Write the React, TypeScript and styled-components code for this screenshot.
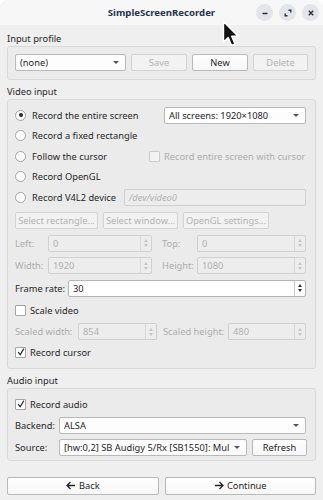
import React from 'react';
import styled, { createGlobalStyle, css } from 'styled-components';

const GlobalStyle = createGlobalStyle`
  html, body { margin: 0; padding: 0; background: #ffffff; }
  body { font-family: "Noto Sans", "DejaVu Sans", sans-serif; font-size: 9.3px; color: #262626; }
`;

const Window = styled.div`
  width: 323px;
  height: 500px;
  background: #efefef;
  border-radius: 8px 8px 0 0;
  overflow: hidden;
  position: relative;
  display: flex;
  flex-direction: column;
`;

const TitleBar = styled.div`
  height: 25px;
  background: #f7f7f8;
  display: flex;
  align-items: center;
  justify-content: center;
  position: relative;
`;

const Title = styled.div`
  font-weight: 700;
  font-size: 9.6px;
  color: #25334f;
`;

const WinButtons = styled.div`
  position: absolute;
  right: 4px;
  top: 4px;
  display: flex;
  gap: 6px;
`;

const WinButton = styled.div`
  width: 17px;
  height: 17px;
  border-radius: 50%;
  background: #e3e5e9;
  display: flex;
  align-items: center;
  justify-content: center;
`;

const Body = styled.div`
  padding: 0 7px 0 7px;
  display: flex;
  flex-direction: column;
`;

const GroupLabel = styled.div<{ $top: number }>`
  margin-top: ${(p) => p.$top}px;
  height: 14px;
  line-height: 14px;
`;

const Group = styled.div<{ $pt: number; $pb: number }>`
  border: 1px solid #d9d9d9;
  border-radius: 3px;
  background: #ebebeb;
  padding: ${(p) => p.$pt}px 9px ${(p) => p.$pb}px 7px;
  display: flex;
  flex-direction: column;
`;

const Row = styled.div<{ $h: number; $gap?: number }>`
  height: ${(p) => p.$h}px;
  display: flex;
  align-items: center;
  gap: ${(p) => p.$gap ?? 0}px;
`;

const Cell = styled.div<{ $w: number }>`
  width: ${(p) => p.$w}px;
  flex: none;
  display: flex;
  align-items: center;
`;

const Label = styled.span<{ $disabled?: boolean; $w?: number; $pl?: number }>`
  color: ${(p) => (p.$disabled ? '#adadad' : '#262626')};
  white-space: nowrap;
  box-sizing: border-box;
  padding-left: ${(p) => p.$pl ?? 0}px;
  ${(p) => p.$w !== undefined && css`width: ${p.$w}px; flex: none;`}
`;

const buttonBase = css<{ $disabled?: boolean }>`
  height: 17px;
  box-sizing: border-box;
  border-radius: 2px;
  border: 1px solid ${(p) => (p.$disabled ? '#d3d3d3' : '#b9b9b9')};
  background: ${(p) => (p.$disabled ? '#f2f2f2' : 'linear-gradient(#fefefe, #f7f7f7)')};
  color: ${(p) => (p.$disabled ? '#b3b3b3' : '#262626')};
  display: flex;
  align-items: center;
  white-space: nowrap;
  overflow: hidden;
`;

const Button = styled.div<{ $w: number; $disabled?: boolean; $ml?: number }>`
  ${buttonBase};
  width: ${(p) => p.$w}px;
  margin-left: ${(p) => p.$ml ?? 0}px;
  flex: none;
  justify-content: center;
  gap: 3px;
`;

const Combo = styled.div<{ $w?: number; $disabled?: boolean }>`
  ${buttonBase};
  ${(p) => (p.$w ? css`width: ${p.$w}px; flex: none;` : css`flex: 1;`)}
  justify-content: space-between;
  padding: 0 6px 0 4px;
  background: #fdfdfd;
`;

const ComboText = styled.span`
  overflow: hidden;
  white-space: nowrap;
`;

const Arrow = styled.span`
  width: 0;
  height: 0;
  border-left: 3px solid transparent;
  border-right: 3px solid transparent;
  border-top: 3px solid #555;
  flex: none;
  margin-left: 4px;
`;

const Field = styled.div<{ $w?: number; $disabled?: boolean }>`
  height: 17px;
  box-sizing: border-box;
  border: 1px solid ${(p) => (p.$disabled ? '#d0d0d0' : '#b5b5b5')};
  border-radius: 2px;
  background: ${(p) => (p.$disabled ? '#ededed' : '#ffffff')};
  color: ${(p) => (p.$disabled ? '#b0b0b0' : '#262626')};
  ${(p) => (p.$w ? css`width: ${p.$w}px; flex: none;` : css`flex: 1;`)}
  display: flex;
  align-items: center;
  padding-left: 4px;
`;

const FieldText = styled.span<{ $italic?: boolean }>`
  flex: 1;
  font-style: ${(p) => (p.$italic ? 'italic' : 'normal')};
`;

const SpinArrows = styled.div<{ $disabled?: boolean }>`
  width: 10px;
  height: 100%;
  border-left: 1px solid ${(p) => (p.$disabled ? '#d8d8d8' : '#c8c8c8')};
  display: flex;
  flex-direction: column;
  align-items: center;
  justify-content: center;
  gap: 2px;
`;

const Tri = styled.span<{ $up?: boolean; $disabled?: boolean }>`
  width: 0;
  height: 0;
  border-left: 2.5px solid transparent;
  border-right: 2.5px solid transparent;
  ${(p) =>
    p.$up
      ? css`border-bottom: 3px solid ${p.$disabled ? '#c4c4c4' : '#333'};`
      : css`border-top: 3px solid ${p.$disabled ? '#c4c4c4' : '#333'};`}
`;

const RadioCircle = styled.span<{ $checked?: boolean }>`
  width: 11px;
  height: 11px;
  box-sizing: border-box;
  border-radius: 50%;
  border: 1px solid #a3a3a3;
  background: #ffffff;
  display: flex;
  align-items: center;
  justify-content: center;
  margin-right: 6px;
  flex: none;
  &::after {
    content: '';
    width: 4px;
    height: 4px;
    border-radius: 50%;
    background: ${(p) => (p.$checked ? '#2a2a2a' : 'transparent')};
  }
`;

const CheckBox = styled.span<{ $disabled?: boolean }>`
  width: 11px;
  height: 11px;
  box-sizing: border-box;
  border: 1px solid ${(p) => (p.$disabled ? '#cccccc' : '#a5a5a5')};
  background: ${(p) => (p.$disabled ? '#f2f2f2' : '#ffffff')};
  border-radius: 1px;
  margin-right: 4px;
  flex: none;
  display: flex;
  align-items: center;
  justify-content: center;
`;

const Footer = styled.div`
  margin-top: 16px;
  display: flex;
  gap: 6px;
`;

const FooterButton = styled.div`
  ${buttonBase};
  flex: 1;
  height: 18px;
  justify-content: center;
  gap: 3px;
`;

const Pointer = styled.svg`
  position: absolute;
  left: 222px;
  top: 20px;
`;

const Radio = ({ checked, label }: { checked?: boolean; label: string }) => (
  <>
    <RadioCircle $checked={checked} />
    <Label>{label}</Label>
  </>
);

const Check = ({ checked, disabled, label }: { checked?: boolean; disabled?: boolean; label: string }) => (
  <>
    <CheckBox $disabled={disabled}>
      {checked && (
        <svg width="8" height="8" viewBox="0 0 8 8">
          <path d="M1.2 4.2L3.2 6.8L6.8 0.8" stroke="#1c1c1c" strokeWidth="1.2" fill="none" />
        </svg>
      )}
    </CheckBox>
    <Label $disabled={disabled}>{label}</Label>
  </>
);

const Spin = ({ value, w, disabled }: { value: string; w?: number; disabled?: boolean }) => (
  <Field $w={w} $disabled={disabled}>
    <FieldText>{value}</FieldText>
    <SpinArrows $disabled={disabled}>
      <Tri $up $disabled={disabled} />
      <Tri $disabled={disabled} />
    </SpinArrows>
  </Field>
);

const ArrowLeft = () => (
  <svg width="10" height="9" viewBox="0 0 10 9">
    <path d="M9 4.5H1.5M4.5 1L1 4.5 4.5 8" stroke="#222" strokeWidth="1.3" fill="none" />
  </svg>
);

const ArrowRight = () => (
  <svg width="10" height="9" viewBox="0 0 10 9">
    <path d="M1 4.5H8.5M5.5 1L9 4.5 5.5 8" stroke="#222" strokeWidth="1.3" fill="none" />
  </svg>
);

export default function App() {
  return (
    <>
      <GlobalStyle />
      <Window>
        <TitleBar>
          <Title>SimpleScreenRecorder</Title>
          <WinButtons>
            <WinButton>
              <svg width="8" height="8" viewBox="0 0 8 8">
                <path d="M1.5 4.5h5" stroke="#25334f" strokeWidth="1.4" />
              </svg>
            </WinButton>
            <WinButton>
              <svg width="8" height="8" viewBox="0 0 8 8">
                <path d="M4.5 1.2h2.3v2.3M3.5 6.8H1.2V4.5" stroke="#25334f" strokeWidth="1.4" fill="none" />
              </svg>
            </WinButton>
            <WinButton>
              <svg width="8" height="8" viewBox="0 0 8 8">
                <path d="M1.8 1.8l4.4 4.4M6.2 1.8L1.8 6.2" stroke="#25334f" strokeWidth="1.4" />
              </svg>
            </WinButton>
          </WinButtons>
        </TitleBar>
        <Body>
          <GroupLabel $top={7}>Input profile</GroupLabel>
          <Group $pt={7} $pb={8}>
            <Row $h={17} $gap={5}>
              <Combo $w={111}>
                <ComboText>(none)</ComboText>
                <Arrow />
              </Combo>
              <Button $w={56} $disabled>Save</Button>
              <Button $w={56}>New</Button>
              <Button $w={55} $disabled>Delete</Button>
            </Row>
          </Group>

          <GroupLabel $top={5}>Video input</GroupLabel>
          <Group $pt={5} $pb={6}>
            <Row $h={20.5}>
              <Cell $w={149}>
                <Radio checked label="Record the entire screen" />
              </Cell>
              <Combo>
                <ComboText>All screens: 1920×1080</ComboText>
                <Arrow />
              </Combo>
            </Row>
            <Row $h={20.5}>
              <Radio label="Record a fixed rectangle" />
            </Row>
            <Row $h={20.5}>
              <Cell $w={134}>
                <Radio label="Follow the cursor" />
              </Cell>
              <Check disabled label="Record entire screen with cursor" />
            </Row>
            <Row $h={20.5}>
              <Radio label="Record OpenGL" />
            </Row>
            <Row $h={21.5}>
              <Cell $w={109}>
                <Radio label="Record V4L2 device" />
              </Cell>
              <Field $disabled>
                <FieldText $italic>/dev/video0</FieldText>
              </Field>
            </Row>
            <Row $h={23} $gap={5}>
              <Button $w={83} $disabled>Select rectangle...</Button>
              <Button $w={75} $disabled>Select window...</Button>
              <Button $w={86} $disabled>OpenGL settings...</Button>
            </Row>
            <Row $h={23}>
              <Label $disabled $w={33}>Left:</Label>
              <Spin value="0" w={104} disabled />
              <Label $disabled $w={45} $pl={10}>Top:</Label>
              <Spin value="0" disabled />
            </Row>
            <Row $h={22.5}>
              <Label $disabled $w={33}>Width:</Label>
              <Spin value="1920" w={104} disabled />
              <Label $disabled $w={45} $pl={10}>Height:</Label>
              <Spin value="1080" disabled />
            </Row>
            <Row $h={22}>
              <Label $w={53}>Frame rate:</Label>
              <Spin value="30" />
            </Row>
            <Row $h={22}>
              <Check label="Scale video" />
            </Row>
            <Row $h={21}>
              <Label $disabled $w={63}>Scaled width:</Label>
              <Spin value="854" w={79} disabled />
              <Label $disabled $w={71} $pl={6}>Scaled height:</Label>
              <Spin value="480" disabled />
            </Row>
            <Row $h={20}>
              <Check checked label="Record cursor" />
            </Row>
          </Group>

          <GroupLabel $top={5}>Audio input</GroupLabel>
          <Group $pt={4} $pb={2}>
            <Row $h={22}>
              <Check checked label="Record audio" />
            </Row>
            <Row $h={21.5}>
              <Label $w={44}>Backend:</Label>
              <Combo>
                <ComboText>ALSA</ComboText>
                <Arrow />
              </Combo>
            </Row>
            <Row $h={21}>
              <Label $w={44}>Source:</Label>
              <Combo $w={188}>
                <ComboText>[hw:0,2] SB Audigy 5/Rx [SB1550]: Mul</ComboText>
                <Arrow />
              </Combo>
              <Button $w={55} $ml={5}>Refresh</Button>
            </Row>
          </Group>

          <Footer>
            <FooterButton>
              <ArrowLeft />
              Back
            </FooterButton>
            <FooterButton>
              <ArrowRight />
              Continue
            </FooterButton>
          </Footer>
        </Body>
        <Pointer width="18" height="28" viewBox="0 0 18 28">
          <path d="M1.5 1.5L1.5 22L6.2 17.6L9.6 25.5L13 24L9.6 16.3L16 16.3Z" fill="#111" stroke="#fff" strokeWidth="1.4" strokeLinejoin="round" />
        </Pointer>
      </Window>
    </>
  );
}
